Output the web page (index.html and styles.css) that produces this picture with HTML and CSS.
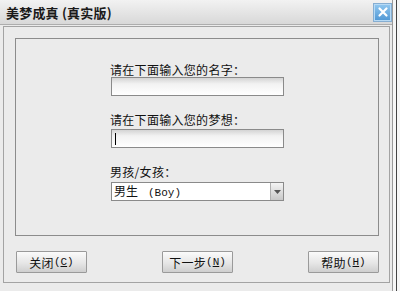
FILE: index.html
```html
<!DOCTYPE html>
<html lang="zh">
<head>
<meta charset="utf-8">
<link rel="stylesheet" href="styles.css">
</head>
<body>
<div class="window">
  <div class="titlebar">
    <span class="title">美梦成真 (真实版)</span>
    <span class="close"><svg width="12" height="12" viewBox="0 0 12 12"><path d="M2.5 2.5 L9.5 9.5 M9.5 2.5 L2.5 9.5" stroke="#fff" stroke-width="2.2" stroke-linecap="round"/></svg></span>
  </div>
  <div class="panel">
    <div class="box">
      <div class="form">
        <div class="label">请在下面输入您的名字：</div>
        <div class="input"></div>
        <div class="label l2">请在下面输入您的梦想：</div>
        <div class="input i2"><span class="caret"></span></div>
        <div class="label l3">男孩/女孩：</div>
        <div class="select">
          <span class="sel-text">男生<span class="mono">(Boy)</span></span>
          <span class="arrow"><svg width="7" height="4" viewBox="0 0 7 4"><path d="M0 0 H7 L3.5 4 Z" fill="#555"/></svg></span>
        </div>
      </div>
    </div>
    <div class="buttons">
      <div class="btn">关闭<span class="acc">(<u>C</u>)</span></div>
      <div class="btn">下一步<span class="acc">(<u>N</u>)</span></div>
      <div class="btn">帮助<span class="acc">(<u>H</u>)</span></div>
    </div>
  </div>
</div>
</body>
</html>
```
FILE: styles.css
```css
html, body {
  margin: 0;
  padding: 0;
  background: #f6f6f6;
}
body {
  width: 400px;
  height: 291px;
  overflow: hidden;
  font-family: "Noto Sans CJK SC", "Noto Sans", sans-serif;
  font-size: 12px;
  color: #111;
}
.window {
  width: 393px;
  height: 291px;
  background: #ebebeb;
  border-right: 1px solid #9a9a9a;
  box-sizing: border-box;
  display: flex;
  flex-direction: column;
  box-shadow: 3px 0 0 #f6f6f6, 4px 0 0 #444;
}
.titlebar {
  height: 25px;
  flex: none;
  box-sizing: border-box;
  display: flex;
  align-items: center;
  justify-content: space-between;
  padding: 0 0 0 6px;
  background: linear-gradient(#f2f2f2, #d8d8d8);
  border-bottom: 1px solid #adadad;
}
.title {
  font-weight: bold;
  font-size: 13px;
  letter-spacing: 0.2px;
  color: #1a1a1a;
}
.close {
  width: 19px;
  height: 19px;
  box-sizing: border-box;
  border: 1px solid #86aed2;
  background: linear-gradient(#92c8f0, #4f97d4);
  display: flex;
  align-items: center;
  justify-content: center;
  box-shadow: inset 0 0 0 1px #b7daf5;
}
.panel {
  margin: 1px 2px 0 3px;
  height: 257px;
  box-sizing: border-box;
  border: 1px solid #a3a3a3;
  padding: 11px 10px 0 11px;
  display: flex;
  flex-direction: column;
}
.box {
  height: 198px;
  box-sizing: border-box;
  border: 1px solid #8c8c8c;
  padding: 24px 0 0 95px;
}
.form {
  width: 173px;
  display: flex;
  flex-direction: column;
}
.label {
  line-height: 14px;
  height: 14px;
  letter-spacing: 0.3px;
  margin-left: -1px;
}
.l2 { margin-top: 17px; }
.l3 { margin-top: 17px; }
.input {
  height: 19px;
  box-sizing: border-box;
  border: 1px solid #8a8a8a;
  background: linear-gradient(#d4d4d4, #f2f2f2 35%, #ffffff);
  position: relative;
}
.i2 { margin-top: 2px; }
.caret {
  position: absolute;
  left: 3px;
  top: 3px;
  width: 1px;
  height: 12px;
  background: #000;
}
.select {
  height: 19px;
  box-sizing: border-box;
  border: 1px solid #8a8a8a;
  background: #fff;
  display: flex;
  align-items: center;
  justify-content: space-between;
  margin-top: 3px;
}
.sel-text {
  padding-left: 2px;
  font-size: 12px;
  line-height: 14px;
}
.mono {
  font-family: "Liberation Mono", monospace;
  font-size: 11px;
  margin-left: 10px;
}
.arrow {
  width: 13px;
  height: 17px;
  box-sizing: border-box;
  border-left: 1px solid #b0b0b0;
  background: linear-gradient(#f4f4f4, #c8c8c8);
  display: flex;
  align-items: center;
  justify-content: center;
}
.buttons {
  display: flex;
  justify-content: space-between;
  margin-top: 15px;
  padding-left: 1px;
}
.btn {
  width: 71px;
  height: 22px;
  box-sizing: border-box;
  border: 1px solid #9a9a9a;
  border-radius: 1px;
  background: linear-gradient(#fbfbfb, #e6e6e6 55%, #cfcfcf);
  display: flex;
  align-items: center;
  justify-content: center;
  font-size: 12px;
  letter-spacing: 0.3px;
}
.acc {
  font-family: "Liberation Mono", monospace;
  font-size: 11px;
  letter-spacing: 0;
}
.acc u {
  text-decoration-thickness: 1px;
  text-underline-offset: 1px;
}
```
